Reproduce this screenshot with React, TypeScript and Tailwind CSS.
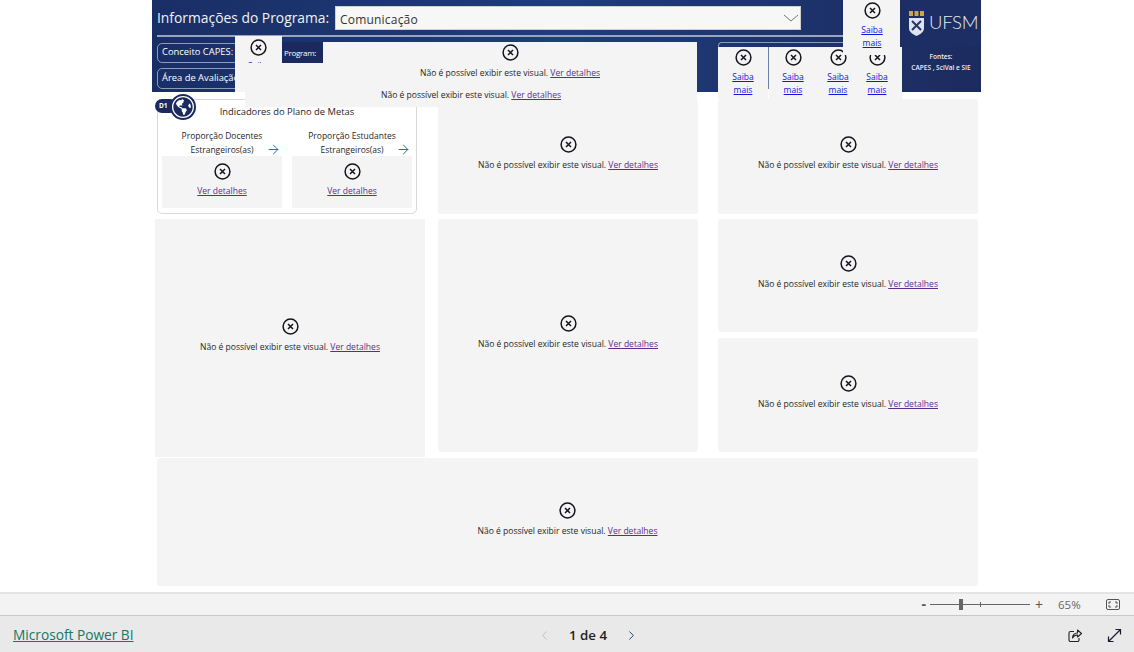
import React from "react";
import { FaGlobeAmericas } from "react-icons/fa";
import { ChevronLeft, ChevronRight, ArrowRight } from "lucide-react";

const font = "font-['Open_Sans','Noto_Sans',sans-serif]";

function XIcon({ size = 17 }: { size?: number }) {
  return (
    <svg width={size} height={size} viewBox="0 0 17 17" className="shrink-0 block">
      <circle cx="8.5" cy="8.5" r="7.4" fill="none" stroke="#14141c" strokeWidth="1.5" />
      <path d="M6 6l5 5M11 6l-5 5" stroke="#14141c" strokeWidth="1.5" fill="none" />
    </svg>
  );
}

function ErrorMsg() {
  return (
    <span className="text-[8.55px] leading-[12px] text-[#1f1f1f] whitespace-nowrap">
      Não é possível exibir este visual.{" "}
      <span className="underline text-[#5c2d91]">Ver detalhes</span>
    </span>
  );
}

function Panel({ className = "" }: { className?: string }) {
  return (
    <div className={`bg-[#f4f4f4] rounded-[3px] flex flex-col items-center justify-center gap-[6px] ${className}`}>
      <XIcon />
      <ErrorMsg />
    </div>
  );
}

function Saiba({ x, y = "top-[2px]" }: { x: string; y?: string }) {
  return (
    <div className={`absolute ${x} ${y} w-[40px] flex flex-col items-center`}>
      <XIcon />
      <span className="mt-[5px] text-[8.5px] leading-[12.5px] text-[#1414e6] underline text-center">
        Saiba
        <br />
        mais
      </span>
    </div>
  );
}

function Small({ line1, line2 }: { line1: string; line2: string }) {
  return (
    <div className="w-[130px] flex flex-col items-center relative">
      <div className="h-[14px] text-[8.5px] leading-[14px] text-[#1f1f1f] whitespace-nowrap">{line1}</div>
      <div className="h-[14px] -mb-[1px] text-[8.5px] leading-[14px] text-[#1f1f1f] whitespace-nowrap">{line2}</div>
      <ArrowRight size={15} strokeWidth={1.6} className="absolute right-[6px] top-[13px] text-[#0f7ab5]" />
      <div className="w-[120px] h-[52px] bg-[#f4f4f4] flex flex-col items-center pt-[7px]">
        <XIcon />
        <span className="mt-[5px] text-[8.5px] leading-[12px] underline text-[#5c2d91]">Ver detalhes</span>
      </div>
    </div>
  );
}

export default function App() {
  return (
    <div className={`${font} h-[652px] w-[1134px] overflow-hidden flex flex-col bg-white`}>
      <main className="h-[592px] relative">
        <div className="w-[830px] ml-[152px] relative">
          {/* Header band */}
          <header className="h-[92px] w-[829px] bg-gradient-to-r from-[#1a2e66] via-[#1e3d7b] to-[#1c2b5f] relative px-[5px] pt-[6px]">
            <div className="flex items-center h-[24px]">
              <span className="text-[13.85px] text-[#f2f2f2] w-[178px] whitespace-nowrap">Informações do Programa:</span>
              <div className="w-[466px] h-[24px] bg-[#f7f7f7] border border-[#d0d0d0] flex items-center justify-between pl-[4px] pr-[1px]">
                <span className="text-[12px] leading-[16px] text-[#333] tracking-[0.2px] mt-[4px]">Comunicação</span>
                <svg width="16" height="8" viewBox="0 0 16 8">
                  <path d="M1 1l7 6 7-6" fill="none" stroke="#7a7568" strokeWidth="1" />
                </svg>
              </div>
            </div>
            <div className="mt-[5px] h-[2px] w-[686px] bg-[#98a5c1]" />
            <div className="mt-[6px] w-[100px] h-[20px] rounded-[5px] border border-[#8d9bba] flex items-center pl-[4px]">
              <span className="text-[9.4px] text-white whitespace-nowrap -mt-[1px]">Conceito CAPES:</span>
            </div>
            <div className="mt-[5px] w-[100px] h-[21px] rounded-[5px] border border-[#8d9bba] flex items-center pl-[4px]">
              <span className="text-[9.4px] text-white whitespace-nowrap">Área de Avaliação:</span>
            </div>
          </header>

          {/* Panels */}
          <div className="flex mt-[7px] ml-[3px] h-[353px]">
            <div className="w-[270px] flex flex-col">
              <div className="ml-[2px] w-[260px] h-[115px] shrink-0 bg-white border border-[#d8d8d8] rounded-[5px] pt-[5px] flex flex-col">
                <div className="text-center text-[9.4px] leading-[14px] text-[#1f1f1f] whitespace-nowrap">Indicadores do Plano de Metas</div>
                <div className="flex -mx-[1px] mt-[10px]">
                  <Small line1="Proporção Docentes" line2="Estrangeiros(as)" />
                  <Small line1="Proporção Estudantes" line2="Estrangeiros(as)" />
                </div>
              </div>
              <Panel className="mt-[5px] h-[238px] shrink-0 !rounded-none pb-[6px]" />
            </div>
            <div className="ml-[13px] w-[260px] flex flex-col gap-[5px]">
              <Panel className="h-[115px] pb-[6px]" />
              <Panel className="h-[233px] pb-[6px]" />
            </div>
            <div className="ml-[20px] w-[260px] flex flex-col">
              <Panel className="h-[115px] pb-[6px]" />
              <Panel className="mt-[5px] h-[113px] pb-[6px]" />
              <Panel className="mt-[6px] h-[114px] pb-[6px]" />
            </div>
          </div>
          <Panel className="mt-[6px] ml-[5px] w-[821px] h-[128px] pb-[6px]" />

          {/* Overlapping visuals */}
          <div className="absolute left-[130px] top-[42px] w-[41px] h-[21px] bg-[#1a2a5e] flex items-center pl-[2px]">
            <span className="text-[8px] text-white tracking-[-0.3px]">Program:</span>
          </div>
          <div className="absolute left-[171px] top-[42px] w-[374px] h-[21px] bg-[#f4f4f4]" />
          <div className="absolute left-[83px] top-[63px] w-[462px] h-[29px] bg-[#f4f4f4]" />
          <div className="absolute left-[93px] top-[92px] w-[452px] h-[15px] bg-[#f4f4f4]" />
          <div className="absolute left-[83px] top-[36px] w-[47px] h-[27px] bg-[#f4f4f4] overflow-hidden flex flex-col items-center pt-[3px]">
            <XIcon />
            <span className="mt-[4px] text-[8.5px] leading-[12px] text-[#1414e6] underline">Saiba</span>
          </div>
          <div className="absolute left-[268px] top-[44px] flex flex-col items-center w-[180px] gap-[6px]">
            <XIcon />
            <ErrorMsg />
          </div>
          <div className="absolute left-[229px] top-[89px] w-[180px] flex justify-center">
            <ErrorMsg />
          </div>

          {/* Right group */}
          <div className="absolute left-[566px] top-[42px] w-[184px] h-[6px] border-t border-l border-[#8d9bba] rounded-tl-[4px]" />
          <div className="absolute left-[566px] top-[47px] w-[184px] h-[52px] bg-[#f4f4f4]">
            <div className="absolute left-[50px] top-0 w-[1px] h-[42px] bg-[#6e7fa6]" />
            <div className="absolute left-[50px] top-[42px] w-[1px] h-[10px] bg-white" />
            <Saiba x="left-[5px]" />
            <Saiba x="left-[55px]" />
            <Saiba x="left-[100px]" />
            <Saiba x="left-[139px]" />
          </div>
          <div className="absolute left-[691px] top-0 w-[58px] h-[55px] bg-[#f4f4f4]">
            <Saiba x="left-[9px]" y="top-[2px]" />
          </div>

          {/* Logo */}
          <div className="absolute left-[748px] top-0 w-[81px] h-[47px] flex items-center gap-[4px] pl-[8px] pb-[1px] bg-[#1c2e63]">
            <svg width="17" height="27" viewBox="0 0 17 27" className="shrink-0">
              <path d="M1 1h4v5H1zM6.500 1h4v5h-4zM12 1h4v5h-4z" fill="#c9a64a" />
              <path d="M1 8h15v10c0 4-3.500 6-7.500 8C4.500 24 1 22 1 18z" fill="#dfe4ee" />
              <path d="M4 11l9 9M13 11l-9 9" stroke="#26356b" strokeWidth="2" />
            </svg>
            <span className="font-['Lato',sans-serif] font-light text-[18.5px] text-[#e8ebf2] tracking-[-0.2px]">UFSM</span>
          </div>
          <div className="absolute left-[749px] top-[52px] w-[80px] text-center text-[6.5px] leading-[10.5px] font-semibold text-[#f0f0f0]">
            Fontes:
            <br />
            CAPES , SciVal e SIE
          </div>

          {/* D1 badge and globe */}
          <div className="absolute left-[3px] top-[99px] w-[22px] h-[14px] rounded-full bg-[#1a2a5e] text-[6.5px] font-bold text-white pl-[4px] leading-[14px]">D1</div>
          <div className="absolute left-[18px] top-[94px] w-[26px] h-[26px] rounded-full bg-white border-[2px] border-[#1a2a5e] flex items-center justify-center">
            <FaGlobeAmericas size={20} className="text-[#1a2a5e]" />
          </div>
        </div>
      </main>

      {/* Zoom bar */}
      <div className="h-[23px] shrink-0 bg-[#f3f3f3] border-t-2 border-[#e4e4e4] flex items-center justify-end relative">
        <span className="text-[14px] leading-none text-[#555] font-bold mr-[4px] -mt-[2px]">-</span>
        <div className="w-[100px] h-[1px] bg-[#666] relative">
          <div className="absolute left-[29px] -top-[5px] w-[4px] h-[11px] bg-[#666]" />
          <div className="absolute left-[50px] -top-[2px] w-[1px] h-[5px] bg-[#666]" />
        </div>
        <span className="text-[14px] leading-none text-[#555] ml-[5px] w-[11px]">+</span>
        <span className="text-[11.5px] text-[#666] ml-[12px] w-[44px]">65%</span>
        <svg width="14" height="11" viewBox="0 0 14 11" className="ml-[4px] mr-[14px]">
          <rect x="0.5" y="0.5" width="13" height="10" rx="1.5" fill="none" stroke="#555" />
          <path d="M3 5V3h2M9 3h2v2M11 6v2H9M5 8H3V6" fill="none" stroke="#555" />
        </svg>
      </div>

      {/* Footer */}
      <footer className="h-[37px] shrink-0 bg-[#e9e9e9] border-t border-[#c8c8c8] flex items-center relative pl-[13px] pr-[12px] pt-[3px]">
        <span className="text-[13.7px] text-[#117865] underline">Microsoft Power BI</span>
        <div className="absolute left-[537px] top-[3px] bottom-0 w-[102px] flex items-center justify-between">
          <ChevronLeft size={15} strokeWidth={1.3} className="text-[#b5b5b5]" />
          <span className="text-[13.3px] font-semibold text-[#1f1f1f]">1 de 4</span>
          <ChevronRight size={15} strokeWidth={1.5} className="text-[#1f3a5c]" />
        </div>
        <div className="ml-auto flex items-center gap-[24px]">
          <svg width="15" height="14" viewBox="0 0 15 14">
            <path d="M6 2.500H2.500a1.500 1.500 0 0 0-1.500 1.500v7a1.500 1.500 0 0 0 1.500 1.500h7A1.500 1.500 0 0 0 11 11V9" fill="none" stroke="#222" strokeWidth="1.1" />
            <path d="M9.500 1l4 3.500-4 3.500V6C7 6 5.500 7 4.500 9c0-3 2-5 5-5z" fill="none" stroke="#222" strokeWidth="1.1" strokeLinejoin="round" />
          </svg>
          <svg width="15" height="15" viewBox="0 0 15 15">
            <path d="M1.500 13.500L13.500 1.500M8.500 1.500h5v5M1.500 8.500v5h5" fill="none" stroke="#1a1a2a" strokeWidth="1.2" />
          </svg>
        </div>
      </footer>
    </div>
  );
}
